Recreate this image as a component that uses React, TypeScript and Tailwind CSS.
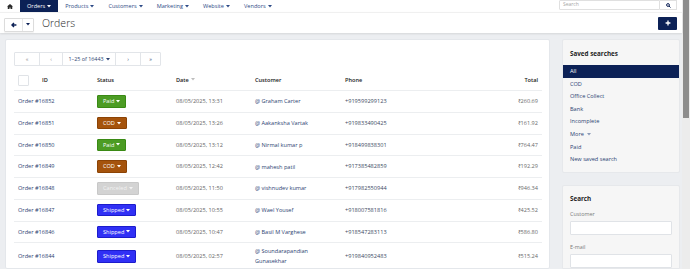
import React from 'react';

type Status = 'Paid' | 'COD' | 'Canceled' | 'Shipped';

const orders: {
  id: string;
  status: Status;
  date: string;
  customer: string;
  phone: string;
  total: string;
}[] = [
  { id: '16852', status: 'Paid', date: '08/05/2025, 13:31', customer: 'Graham Carter', phone: '+919599299123', total: '₹260.69' },
  { id: '16851', status: 'COD', date: '08/05/2025, 13:26', customer: 'Aakanksha Vartak', phone: '+919833490425', total: '₹161.92' },
  { id: '16850', status: 'Paid', date: '08/05/2025, 13:12', customer: 'Nirmal kumar p', phone: '+918499838301', total: '₹764.47' },
  { id: '16849', status: 'COD', date: '08/05/2025, 12:42', customer: 'mahesh patil', phone: '+917385482859', total: '₹192.29' },
  { id: '16848', status: 'Canceled', date: '08/05/2025, 11:50', customer: 'vishnudev kumar', phone: '+917982550944', total: '₹946.34' },
  { id: '16847', status: 'Shipped', date: '08/05/2025, 10:55', customer: 'Wael Yousef', phone: '+918007581816', total: '₹425.52' },
  { id: '16846', status: 'Shipped', date: '08/05/2025, 10:47', customer: 'Basil M Varghese', phone: '+918547283113', total: '₹586.80' },
  { id: '16844', status: 'Shipped', date: '08/05/2025, 02:57', customer: 'Soundarapandian Gunasekhar', phone: '+919840952483', total: '₹515.24' },
];

const statusStyles: Record<Status, string> = {
  Paid: 'bg-[#4c9c24] border-[#3a8a15] text-white',
  COD: 'bg-[#a5530c] border-[#8c4305] text-white',
  Canceled: 'bg-[#d3d3d3] border-[#c8c8c8] text-[#f2f2f2]',
  Shipped: 'bg-[#3030f5] border-[#1c1ccc] text-white',
};

const savedSearches = ['All', 'COD', 'Office Collect', 'Bank', 'Incomplete', 'More', 'Paid', 'New saved search'];

const navItems = ['Orders', 'Products', 'Customers', 'Marketing', 'Website', 'Vendors'];

const Caret = ({ className = '' }: { className?: string }) => (
  <svg viewBox="0 0 4 3" className={`w-[4px] h-[3px] ${className}`} fill="currentColor">
    <path d="M0 0h4L2 2.5z" />
  </svg>
);

const cols = 'grid grid-cols-[79px_79px_79px_90px_1fr_100px] items-center';

const App = () => {
  return (
    <div className="flex w-[690px] h-[269px] overflow-hidden font-['Open_Sans',sans-serif] bg-[#eceef1]">
      <div className="flex-1 flex flex-col min-w-0">
        {/* Top nav */}
        <div className="h-[12px] bg-white flex items-stretch pr-[5px] text-[5.6px]">
          <div className="w-[20px] flex items-center justify-center">
            <svg viewBox="0 0 12 10" className="w-[6px] h-[5px]" fill="#2b2b2b">
              <path d="M6 0 0 5h1.5v5h3.5V7h2v3h3.5V5H12z" />
            </svg>
          </div>
          {navItems.map((item, i) => (
            <div
              key={item}
              className={`flex items-center gap-[2px] px-[7px] ${
                i === 0 ? 'bg-[#0c2156] text-white' : 'text-[#2d4a86]'
              }`}
            >
              {item}
              <Caret />
            </div>
          ))}
          <div className="ml-auto flex h-[10px]">
            <div className="w-[101px] border border-[#e0e0e0] rounded-l-[1px] flex items-center pl-[3px] text-[5px] text-[#a5a5a5]">
              Search
            </div>
            <div className="w-[17px] border border-l-0 border-[#e0e0e0] flex items-center justify-center">
              <svg viewBox="0 0 10 10" className="w-[5px] h-[5px]" fill="none" stroke="#0c2156" strokeWidth="2">
                <circle cx="4" cy="4" r="2.8" />
                <path d="M6 6l3 3" />
              </svg>
            </div>
          </div>
        </div>

        {/* Page header */}
        <div className="h-[21px] bg-white border-t border-[#f0f0f0] shadow-[0_1px_2px_rgba(0,0,0,0.1)] flex items-center pl-[4px] pr-[5px] relative z-10">
          <div className="flex h-[14px] mt-[3px] border border-[#dcdcdc] rounded-[1px] shadow-[0_1px_1px_rgba(0,0,0,0.05)]">
            <div className="w-[17px] flex items-center justify-center">
              <svg viewBox="0 0 10 10" className="w-[6px] h-[6px]" fill="none" stroke="#0c2156" strokeWidth="2.4">
                <path d="M9 5H2M5 1.5 1.5 5 5 8.5" />
              </svg>
            </div>
            <div className="w-[11px] border-l border-[#e6e6e6] flex items-center justify-center text-[#0c2156]">
              <Caret className="w-[3px] h-[2px]" />
            </div>
          </div>
          <h1 className="ml-[8px] mt-[1px] text-[10.5px] font-light text-[#2a2a2a] leading-none">Orders</h1>
          <div className="ml-auto w-[19px] h-[13px] bg-[#0c2156] rounded-[1px] flex items-center justify-center">
            <svg viewBox="0 0 10 10" className="w-[6px] h-[6px]" fill="none" stroke="white" strokeWidth="2.2">
              <path d="M5 1v8M1 5h8" />
            </svg>
          </div>
        </div>

        {/* Content */}
        <div className="flex-1 flex gap-[12px] pl-[5px] pt-[6px] min-h-0">
          {/* Orders card */}
          <div className="w-[545px] bg-white border border-[#e4e7eb] rounded-[2px] pt-[12px] pl-[8px] pr-[7px]">
            <div className="flex w-[147px] h-[14px] border border-[#e2e5e9] rounded-[1px] text-[5.4px] text-[#8a8a8a]">
              <div className="w-[24px] flex items-center justify-center">«</div>
              <div className="w-[23px] border-l border-[#e2e5e9] flex items-center justify-center">‹</div>
              <div className="w-[53px] border-l border-[#e2e5e9] flex items-center justify-center gap-[2px] text-[#2c4372]">
                1–25 of 16443
                <Caret />
              </div>
              <div className="w-[25px] border-l border-[#e2e5e9] flex items-center justify-center text-[#2c4372]">›</div>
              <div className="flex-1 border-l border-[#e2e5e9] flex items-center justify-center text-[#2c4372]">»</div>
            </div>

            <div className="mt-[4px] text-[5.6px]">
              <div className={`${cols} h-[21px] border-b border-[#eceef0] font-semibold text-[#222]`}>
                <div className="flex items-center gap-[13px] pl-[4px]">
                  <div className="w-[11px] h-[11px] border border-[#e0e3e7] rounded-[1px] bg-white" />
                  ID
                </div>
                <div className="px-[4px]">Status</div>
                <div className="px-[4px] flex items-center gap-[2px]">
                  Date
                  <Caret className="text-[#bdbdbd]" />
                </div>
                <div className="px-[4px]">Customer</div>
                <div className="px-[4px]">Phone</div>
                <div className="px-[4px] text-right">Total</div>
              </div>

              {orders.map((o, i) => (
                <div
                  key={o.id}
                  className={`${cols} border-b border-[#eceef0] ${
                    i === orders.length - 1 ? 'py-[3px]' : 'h-[21.75px]'
                  }`}
                >
                  <div className="px-[4px] text-[#2c4372]">Order #{o.id}</div>
                  <div className="px-[4px]">
                    <span
                      className={`inline-flex items-center gap-[2px] h-[12.5px] px-[5px] border rounded-[1px] ${statusStyles[o.status]}`}
                    >
                      {o.status}
                      <Caret />
                    </span>
                  </div>
                  <div className="px-[4px] text-[#666]">{o.date}</div>
                  <div className="px-[4px] text-[#2c4372] leading-[10px]">@ {o.customer}</div>
                  <div className="px-[4px] text-[#3d4a63]">{o.phone}</div>
                  <div className="px-[4px] text-right text-[#6b6b6b]">{o.total}</div>
                </div>
              ))}
            </div>
          </div>

          {/* Sidebar */}
          <div className="w-[118px] flex flex-col gap-[12px]">
            <div className="h-[134px] bg-[#f6f6f6] border border-[#e6e8eb] rounded-[2px] pt-[9px]">
              <h2 className="px-[7px] h-[10px] leading-[10px] text-[6.3px] font-bold text-[#1e1e1e]">Saved searches</h2>
              <div className="mt-[6px] text-[5.6px]">
                {savedSearches.map((s, i) => (
                  <div
                    key={s}
                    className={`h-[12.6px] flex items-center gap-[3px] px-[7px] ${
                      i === 0 ? 'bg-[#0c2156] text-white h-[11.5px]' : 'text-[#2c4372]'
                    }`}
                  >
                    {s}
                    {s === 'More' && <Caret className="text-[#8a9ab8]" />}
                  </div>
                ))}
              </div>
            </div>

            <div className="flex-1 bg-[#f6f6f6] border border-[#e6e8eb] rounded-t-[2px] px-[7px] pt-[8px]">
              <h2 className="h-[10px] leading-[10px] text-[6.3px] font-bold text-[#1e1e1e]">Search</h2>
              <div className="mt-[6px] text-[5.4px] text-[#7a7a7a] leading-[8px]">Customer</div>
              <div className="mt-[3px] h-[14px] bg-white border border-[#e0e3e7] rounded-[1px]" />
              <div className="mt-[8px] text-[5.4px] text-[#7a7a7a] leading-[8px]">E-mail</div>
              <div className="mt-[3px] h-[14px] bg-white border border-[#e0e3e7] rounded-[1px]" />
            </div>
          </div>
        </div>
      </div>

      {/* Scrollbar */}
      <div className="w-[8px] bg-[#ececec] flex justify-center">
        <div className="w-[6px] h-[118px] bg-[#8d8d8d]" />
      </div>
    </div>
  );
};

export default App;
